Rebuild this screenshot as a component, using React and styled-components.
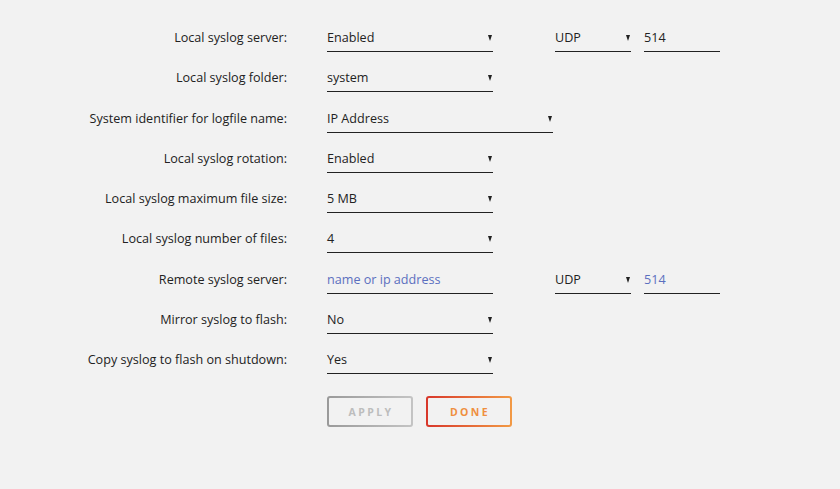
import React from 'react'
import styled, { createGlobalStyle } from 'styled-components'

const GlobalStyle = createGlobalStyle`
    html, body {
        margin: 0;
        background: #f2f2f2;
    }
    body {
        font-family: 'Open Sans', Lato, sans-serif;
        font-size: 12.6px;
        color: #222;
    }
`

const Form = styled.div`
    padding-top: 28px;
    display: flex;
    flex-direction: column;
`

const Row = styled.div`
    display: flex;
    align-items: flex-start;
    height: 40.25px;
`

const Label = styled.div`
    width: 287px;
    margin-right: 40px;
    text-align: right;
    line-height: 20px;
`

const Select = styled.div`
    position: relative;
    box-sizing: border-box;
    width: ${({ width }) => width || 166}px;
    height: 24px;
    border-bottom: 1px solid #222;
    line-height: 20px;
    margin-right: ${({ gap }) => gap || 0}px;

    &::after {
        content: '';
        position: absolute;
        right: 1.5px;
        top: 7px;
        border-left: 2.75px solid transparent;
        border-right: 2.75px solid transparent;
        border-top: 6px solid #222;
    }
`

const Input = styled.div`
    box-sizing: border-box;
    width: ${({ width }) => width || 166}px;
    height: 24px;
    border-bottom: 1px solid #222;
    line-height: 20px;
    margin-right: ${({ gap }) => gap || 0}px;
    color: ${({ placeholder }) => (placeholder ? '#5b6fbf' : '#222')};
`

const Actions = styled.div`
    display: flex;
    gap: 13px;
    margin: 6px 0 0 327px;
`

const Button = styled.button`
    box-sizing: border-box;
    width: 86px;
    height: 31px;
    border: 2px solid transparent;
    border-radius: 3px;
    font-family: 'Open Sans', sans-serif;
    font-size: 10.5px;
    font-weight: 700;
    letter-spacing: 2.4px;
    padding: 0 0 0 2px;
    background:
        linear-gradient(#f2f2f2, #f2f2f2) padding-box,
        linear-gradient(90deg, ${({ from }) => from}, ${({ to }) => to}) border-box;
    color: ${({ text }) => text};
    cursor: pointer;
`

const rows = [
    { label: 'Local syslog server:', value: 'Enabled', proto: 'UDP', port: '514' },
    { label: 'Local syslog folder:', value: 'system' },
    { label: 'System identifier for logfile name:', value: 'IP Address', wide: true },
    { label: 'Local syslog rotation:', value: 'Enabled' },
    { label: 'Local syslog maximum file size:', value: '5 MB' },
    { label: 'Local syslog number of files:', value: '4' },
    { label: 'Remote syslog server:', input: 'name or ip address', proto: 'UDP', port: '514', placeholder: true },
    { label: 'Mirror syslog to flash:', value: 'No' },
    { label: 'Copy syslog to flash on shutdown:', value: 'Yes' },
]

export default function App() {
    return (
        <>
            <GlobalStyle />
            <Form>
                {rows.map(row => (
                    <Row key={row.label}>
                        <Label>{row.label}</Label>
                        {row.input ? (
                            <Input placeholder={row.placeholder} gap={row.proto ? 62 : 0}>
                                {row.input}
                            </Input>
                        ) : (
                            <Select width={row.wide ? 226 : 166} gap={row.proto ? 62 : 0}>
                                {row.value}
                            </Select>
                        )}
                        {row.proto && (
                            <>
                                <Select width={76} gap={13}>{row.proto}</Select>
                                <Input width={76} placeholder={row.placeholder}>
                                    {row.port}
                                </Input>
                            </>
                        )}
                    </Row>
                ))}
                <Actions>
                    <Button from="#9a9a9a" to="#c4c4c4" text="#bdbdbd">APPLY</Button>
                    <Button from="#d8372b" to="#f29a45" text="#ef8f3f">DONE</Button>
                </Actions>
            </Form>
        </>
    )
}
